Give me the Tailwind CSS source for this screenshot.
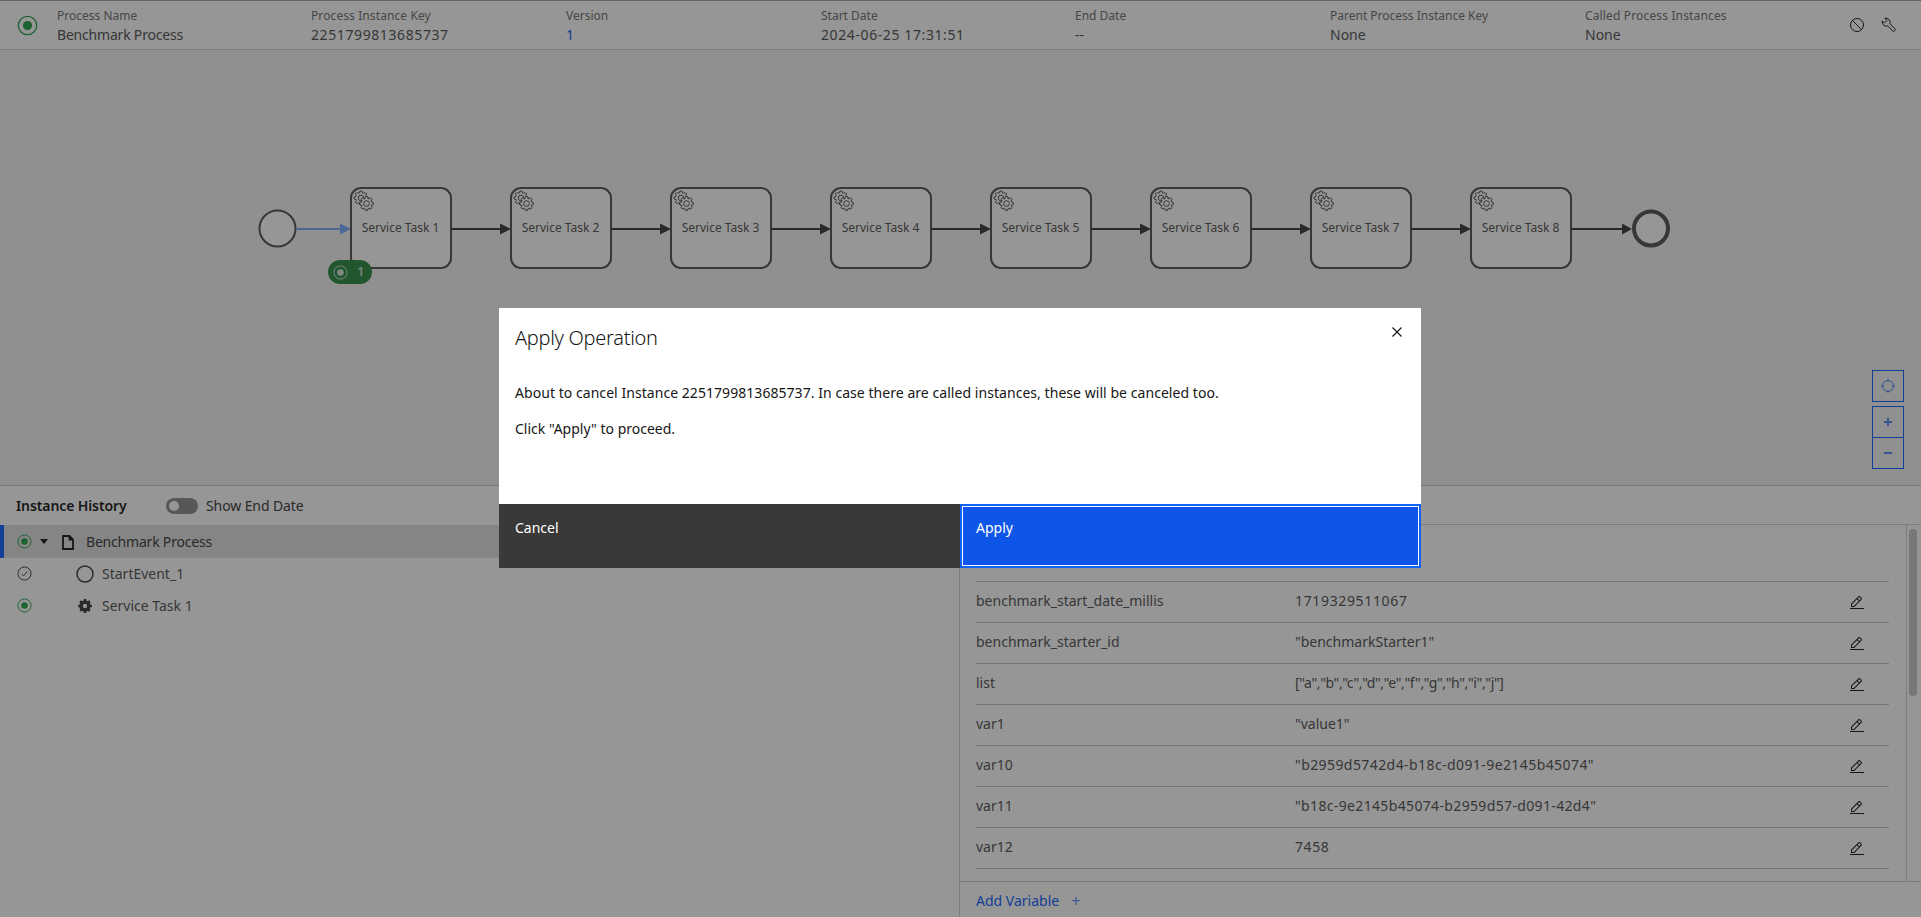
<!DOCTYPE html>
<html lang="en">
  <head>
    <meta charset="UTF-8" />
    <title>Operate - Instance</title>
    <script src="https://cdn.jsdelivr.net/npm/@tailwindcss/browser@4"></script>
  </head>
  <body class="font-['Noto_Sans',sans-serif] h-[917px] w-full overflow-hidden bg-white text-[#161616] relative">
    <svg class="hidden">
      <defs>
        <symbol id="active" viewBox="0 0 16 16">
          <circle cx="8" cy="8" r="7" fill="none" stroke="currentColor" stroke-width="1" />
          <circle cx="8" cy="8" r="3.5" fill="currentColor" />
        </symbol>
        <symbol id="edit" viewBox="0 0 32 32">
          <path fill="currentColor" d="M2 26H30V28H2zM25.4 9c.8-.8.8-2 0-2.8l-3.6-3.6c-.8-.8-2-.8-2.8 0l-15 15V24h6.4L25.4 9zM20.4 4L24 7.6l-3 3L17.4 7 20.4 4zM6 22v-3.6l10-10 3.6 3.6-10 10H6z" />
        </symbol>
        <polygon id="gear" points="4.97,-1.52 6.91,-1.1 6.91,1.1 4.97,1.52 4.59,2.44 5.66,4.11 4.11,5.66 2.44,4.59 1.52,4.97 1.1,6.91 -1.1,6.91 -1.52,4.97 -2.44,4.59 -4.11,5.66 -5.66,4.11 -4.59,2.44 -4.97,1.52 -6.91,1.1 -6.91,-1.1 -4.97,-1.52 -4.59,-2.44 -5.66,-4.11 -4.11,-5.66 -2.44,-4.59 -1.52,-4.97 -1.1,-6.91 1.1,-6.91 1.52,-4.97 2.44,-4.59 4.11,-5.66 5.66,-4.11 4.59,-2.44" />
        <g id="task">
          <rect x="1" y="1" width="100" height="80" rx="10" fill="#fff" stroke="#525252" stroke-width="2" />
          <g transform="translate(11 11)" fill="#fff" stroke="#525252" stroke-width="1">
            <use href="#gear" /><circle r="2.8" />
          </g>
          <g transform="translate(16.500 16.500)" fill="#fff" stroke="#525252" stroke-width="1">
            <use href="#gear" /><circle r="2.8" />
          </g>
        </g>
      </defs>
    </svg>

    <!-- Instance header -->
    <header class="h-[50px] flex items-center pt-[3px] border-t border-b border-t-[#a8a8a8] border-b-[#d0d0d0] bg-white">
      <div class="w-[57px] pl-[17px] -mt-[3px] shrink-0 text-[#24a148]">
        <svg class="w-[21px] h-[21px]"><use href="#active" /></svg>
      </div>
      <div class="w-[254px] shrink-0">
        <div class="text-xs leading-4 text-[#6f6f6f]">Process Name</div>
        <div class="text-sm leading-5 mt-px tracking-[-0.2px] text-[#525252]">Benchmark Process</div>
      </div>
      <div class="w-[255px] shrink-0">
        <div class="text-xs leading-4 tracking-[0.1px] text-[#6f6f6f]">Process Instance Key</div>
        <div class="text-sm leading-5 mt-px tracking-[0.6px] text-[#525252]">2251799813685737</div>
      </div>
      <div class="w-[255px] shrink-0">
        <div class="text-xs leading-4 text-[#6f6f6f]">Version</div>
        <div class="text-sm leading-5 mt-px text-[#0f62fe]">1</div>
      </div>
      <div class="w-[254px] shrink-0">
        <div class="text-xs leading-4 text-[#6f6f6f]">Start Date</div>
        <div class="text-sm leading-5 mt-px tracking-[0.6px] text-[#525252]">2024-06-25 17:31:51</div>
      </div>
      <div class="w-[255px] shrink-0">
        <div class="text-xs leading-4 text-[#6f6f6f]">End Date</div>
        <div class="text-sm leading-5 mt-px text-[#525252]">--</div>
      </div>
      <div class="w-[255px] shrink-0">
        <div class="text-xs leading-4 text-[#6f6f6f]">Parent Process Instance Key</div>
        <div class="text-sm leading-5 mt-px text-[#525252]">None</div>
      </div>
      <div class="w-[264px] shrink-0">
        <div class="text-xs leading-4 tracking-[0.15px] text-[#6f6f6f]">Called Process Instances</div>
        <div class="text-sm leading-5 mt-px text-[#525252]">None</div>
      </div>
      <div class="flex items-center gap-[16px] -mt-[3px] text-[#161616]">
        <svg class="w-4 h-4" viewBox="0 0 16 16" fill="none" stroke="currentColor"><circle cx="8" cy="8" r="6.500" /><path d="M3.400 3.400l9.200 9.200" /></svg>
        <svg class="w-4 h-4" viewBox="0 0 16 16" fill="none" stroke="currentColor"><path d="M3.800 1.200L6 3.400 3.400 6 1.200 3.800A4.500 4.500 0 0 0 6.800 9L12.500 14.700 14.700 12.500 9 6.800A4.500 4.500 0 0 0 3.800 1.200Z" /></svg>
      </div>
    </header>

    <!-- Diagram -->
    <section class="h-[436px] bg-[#f4f4f4] border-b border-[#c6c6c6] relative">
      <svg class="absolute left-0 top-0" width="1921" height="435" viewBox="0 50 1921 435">
        <circle cx="277.500" cy="228.500" r="18" fill="#fff" stroke="#525252" stroke-width="2" />
        <path d="M296 229H341" stroke="#76aeff" stroke-width="2" />
        <path d="M340 223.500L351 229L340 234.500Z" fill="#76aeff" />
        <g stroke="#393939" stroke-width="2">
          <path d="M451 229H500M611 229H660M771 229H820M931 229H980M1091 229H1140M1251 229H1300M1411 229H1460M1571 229H1622" />
        </g>
        <path fill="#393939" d="M500 223.500L511 229L500 234.500ZM660 223.500L671 229L660 234.500ZM820 223.500L831 229L820 234.500ZM980 223.500L991 229L980 234.500ZM1140 223.500L1151 229L1140 234.500ZM1300 223.500L1311 229L1300 234.500ZM1460 223.500L1471 229L1460 234.500ZM1622 223.500L1632 229L1622 234.500Z" />
        <use href="#task" x="350" y="187" /><use href="#task" x="510" y="187" /><use href="#task" x="670" y="187" /><use href="#task" x="830" y="187" />
        <use href="#task" x="990" y="187" /><use href="#task" x="1150" y="187" /><use href="#task" x="1310" y="187" /><use href="#task" x="1470" y="187" />
        <circle cx="1651" cy="228.500" r="17" fill="#fff" stroke="#525252" stroke-width="4" />
        <g font-size="12" fill="#525252" text-anchor="middle">
          <text x="400.500" y="232">Service Task 1</text><text x="560.500" y="232">Service Task 2</text>
          <text x="720.500" y="232">Service Task 3</text><text x="880.500" y="232">Service Task 4</text>
          <text x="1040.500" y="232">Service Task 5</text><text x="1200.500" y="232">Service Task 6</text>
          <text x="1360.500" y="232">Service Task 7</text><text x="1520.500" y="232">Service Task 8</text>
        </g>
      </svg>
      <div class="absolute left-[328px] top-[210px] h-6 w-11 rounded-xl bg-[#2b8a43] text-white/80 flex items-center gap-[9px] pl-[5px] text-[13px] font-medium">
        <svg class="w-[15px] h-[15px]"><use href="#active" /></svg><span>1</span>
      </div>
      <div class="absolute left-[1872px] top-[320px] text-[#0f62fe] flex flex-col">
        <button class="w-8 h-8 mb-1 border border-[#0f62fe] bg-[#f4f4f4] flex items-center justify-center">
          <svg class="w-4 h-4 opacity-70" viewBox="0 0 16 16" fill="none" stroke="currentColor"><circle cx="8" cy="8" r="5.500" /><path stroke-width="2" d="M8 1.500v2M8 12.500v2M1.500 8h2M12.500 8h2" /></svg>
        </button>
        <button class="w-8 h-8 border border-[#0f62fe] bg-[#f4f4f4] flex items-center justify-center">
          <svg class="w-2.5 h-2.5 opacity-70" viewBox="0 0 10 10" fill="currentColor"><path d="M4 1h2v3h3v2H6v3H4V6H1V4h3z" /></svg>
        </button>
        <button class="w-8 h-8 -mt-px border border-[#0f62fe] bg-[#f4f4f4] flex items-center justify-center">
          <svg class="w-2.5 h-2.5 opacity-70" viewBox="0 0 10 10" fill="currentColor"><path d="M1 4h8v2H1z" /></svg>
        </button>
      </div>
    </section>

    <!-- Bottom panels -->
    <section class="h-[431px] flex bg-white">
      <div class="w-[960px] shrink-0 border-r border-[#d0d0d0]">
        <div class="h-[39px] flex items-center pl-4">
          <span class="text-sm font-semibold tracking-[-0.1px] w-[150px]">Instance History</span>
          <span class="w-8 h-4 rounded-full bg-[#8d8d8d] relative mr-2">
            <span class="absolute left-[3px] top-[3px] w-2.5 h-2.5 rounded-full bg-white"></span>
          </span>
          <span class="text-sm tracking-[-0.1px] text-[#393939]">Show End Date</span>
        </div>
        <div class="h-[33px] flex items-center bg-[#e0e0e0] border-l-4 border-[#0f62fe] relative">
          <svg class="absolute left-[13px] top-[9px] w-[15px] h-[15px] text-[#24a148]"><use href="#active" /></svg>
          <span class="absolute left-[36px] top-[14px] w-0 h-0 border-x-4 border-x-transparent border-t-[5px] border-t-[#161616]"></span>
          <svg class="absolute left-[58px] top-[10px] w-3 h-[15px]" viewBox="0 0 12 15" fill="none" stroke="#161616" stroke-width="1.800"><path d="M1 1h6.500l3.500 3.500V14H1zM7.500 1v3.500H11" /></svg>
          <span class="pl-[82px] text-sm tracking-[-0.2px] text-[#393939]">Benchmark Process</span>
        </div>
        <div class="h-8 flex items-center relative">
          <svg class="absolute left-[17px] top-[8px] w-[15px] h-[15px]" viewBox="0 0 16 16" fill="none" stroke="#393939"><circle cx="8" cy="8" r="7" /><path d="M5 8.500l2 2 4-4.500" /></svg>
          <svg class="absolute left-[76px] top-[7px] w-[18px] h-[18px]" viewBox="0 0 18 18" fill="none" stroke="#393939" stroke-width="1.500"><circle cx="9" cy="9" r="8" /></svg>
          <span class="pl-[102px] text-sm text-[#525252]">StartEvent_1</span>
        </div>
        <div class="h-8 flex items-center relative">
          <svg class="absolute left-[17px] top-[8px] w-[15px] h-[15px] text-[#24a148]"><use href="#active" /></svg>
          <svg class="absolute left-[77px] top-[8px] w-4 h-4" viewBox="-8 -8 16 16" fill="#393939"><use href="#gear" /><circle r="5.500" /><circle r="2.200" fill="#fff" /></svg>
          <span class="pl-[102px] text-sm text-[#525252]">Service Task 1</span>
        </div>
      </div>
      <div class="flex-1 min-w-0 flex flex-col relative">
        <div class="h-[39px] border-b border-[#d0d0d0] flex items-center pl-4 text-sm font-semibold">Variables</div>
        <div class="absolute right-0 top-[39px] bottom-9 w-[15px] border-l border-[#d0d0d0]"></div>
        <div class="absolute right-1 top-[43px] w-2 h-[167px] rounded-full bg-[#c6c6c6]"></div>
        <div class="flex-1 pl-4 pr-8">
          <div class="h-[57px] border-b border-[#c6c6c6] flex items-end pb-5 text-xs text-[#525252]">
            <span class="w-[319px]">Name</span><span>Value</span>
          </div>
          <div class="h-[41px] border-b border-[#c6c6c6] flex items-center text-sm text-[#525252]">
            <span class="w-[319px] -mt-[3px]">benchmark_start_date_millis</span><span class="flex-1 -mt-[3px] tracking-[0.65px]">1719329511067</span>
            <svg class="w-4 h-4 mr-6 mt-px text-[#161616]"><use href="#edit" /></svg>
          </div>
          <div class="h-[41px] border-b border-[#c6c6c6] flex items-center text-sm text-[#525252]">
            <span class="w-[319px] -mt-[3px]">benchmark_starter_id</span><span class="flex-1 -mt-[3px]">"benchmarkStarter1"</span>
            <svg class="w-4 h-4 mr-6 mt-px text-[#161616]"><use href="#edit" /></svg>
          </div>
          <div class="h-[41px] border-b border-[#c6c6c6] flex items-center text-sm text-[#525252]">
            <span class="w-[319px] -mt-[3px]">list</span><span class="flex-1 -mt-[3px] tracking-[-0.36px]">["a","b","c","d","e","f","g","h","i","j"]</span>
            <svg class="w-4 h-4 mr-6 mt-px text-[#161616]"><use href="#edit" /></svg>
          </div>
          <div class="h-[41px] border-b border-[#c6c6c6] flex items-center text-sm text-[#525252]">
            <span class="w-[319px] -mt-[3px]">var1</span><span class="flex-1 -mt-[3px]">"value1"</span>
            <svg class="w-4 h-4 mr-6 mt-px text-[#161616]"><use href="#edit" /></svg>
          </div>
          <div class="h-[41px] border-b border-[#c6c6c6] flex items-center text-sm text-[#525252]">
            <span class="w-[319px] -mt-[3px]">var10</span><span class="flex-1 -mt-[3px] tracking-[0.42px]">"b2959d5742d4-b18c-d091-9e2145b45074"</span>
            <svg class="w-4 h-4 mr-6 mt-px text-[#161616]"><use href="#edit" /></svg>
          </div>
          <div class="h-[41px] border-b border-[#c6c6c6] flex items-center text-sm text-[#525252]">
            <span class="w-[319px] -mt-[3px]">var11</span><span class="flex-1 -mt-[3px] tracking-[0.35px]">"b18c-9e2145b45074-b2959d57-d091-42d4"</span>
            <svg class="w-4 h-4 mr-6 mt-px text-[#161616]"><use href="#edit" /></svg>
          </div>
          <div class="h-[41px] border-b border-[#c6c6c6] flex items-center text-sm text-[#525252]">
            <span class="w-[319px] -mt-[3px]">var12</span><span class="flex-1 -mt-[3px] tracking-[0.6px]">7458</span>
            <svg class="w-4 h-4 mr-6 mt-px text-[#161616]"><use href="#edit" /></svg>
          </div>
        </div>
        <div class="h-9 border-t border-[#d0d0d0] flex items-center pl-4 pt-[2px] text-sm text-[#0f62fe]">
          <span>Add Variable</span><span class="ml-3 text-base opacity-70">+</span>
        </div>
      </div>
    </section>

    <!-- Modal -->
    <div class="absolute inset-0 bg-[#161616]/45 flex items-start justify-center pt-[308px]">
      <div class="w-[922px] ml-[-1px] bg-white">
        <div class="h-[196px] px-4 pt-4 relative">
          <h2 class="text-xl leading-7 font-light tracking-[-0.3px] text-[#161616]">Apply Operation</h2>
          <button class="absolute right-4 top-4 w-4 h-4 text-[#161616]">
            <svg viewBox="0 0 16 16" fill="none" stroke="currentColor" stroke-width="1.200"><path d="M3.500 3.500l9 9M12.500 3.500l-9 9" /></svg>
          </button>
          <p class="mt-[31px] text-sm leading-5 tracking-[0.05px] text-[#161616]">About to cancel Instance 2251799813685737. In case there are called instances, these will be canceled too.</p>
          <p class="mt-4 text-sm leading-5 text-[#161616]">Click "Apply" to proceed.</p>
        </div>
        <div class="flex h-16">
          <button class="flex-1 bg-[#393939] text-white text-sm text-left px-4 pt-[14px] leading-5 flex items-start">Cancel</button>
          <button class="flex-1 bg-[#0f55e8] text-white text-sm text-left px-[14px] pt-[12px] leading-5 flex items-start border-2 border-[#0f62fe] outline-1 -outline-offset-3 outline-white">Apply</button>
        </div>
      </div>
    </div>
  </body>
</html>
